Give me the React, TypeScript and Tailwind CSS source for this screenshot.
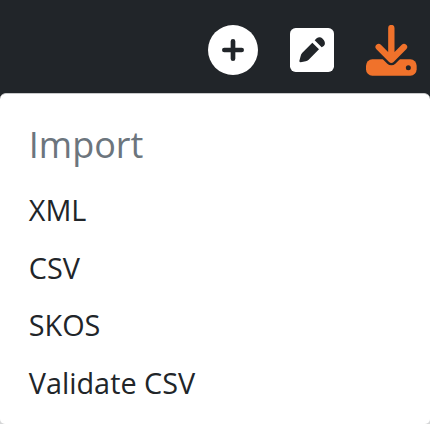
import React from "react";

const items = ["XML", "CSV", "SKOS", "Validate CSV"];

const AddIcon: React.FC = () => (
  <svg viewBox="0 0 150 150" className="h-[50px] w-[50px]">
    <circle cx="75" cy="75" r="75" fill="#fff" />
    <path d="M75 49V101M49 75H101" stroke="#212529" strokeWidth="14" strokeLinecap="round" />
  </svg>
);

const EditIcon: React.FC = () => (
  <svg viewBox="0 0 132 132" className="h-[44px] w-[44px]">
    <rect width="132" height="132" rx="17" fill="#fff" />
    <path
      d="M67 44L87 64L56 95Q52 99 47 100L32 103Q28 103 28 99L32 84Q33 78 37 74Z"
      fill="#212529"
    />
    <path
      d="M74 37L80 31Q89 24 98 32Q107 41 104 50Q103 53 95 58Z"
      fill="#212529"
    />
  </svg>
);

const ImportIcon: React.FC = () => (
  <svg viewBox="0 0 153 153" className="h-[51px] w-[51px]" fill="none">
    <rect x="0" y="103" width="152" height="49" rx="19" fill="#f0722b" />
    <circle cx="127" cy="128" r="7.5" fill="#212529" />
    {/* dark outline keeps the arrow head apart from the tray */}
    <path
      d="M38 66L76 104L114 66"
      stroke="#212529"
      strokeWidth="34"
      strokeLinejoin="round"
    />
    <path
      d="M76 9V103M38 66L76 104L114 66"
      stroke="#f0722b"
      strokeWidth="19"
      strokeLinecap="round"
      strokeLinejoin="round"
    />
  </svg>
);

const App: React.FC = () => {
  return (
    <div className="flex h-[424px] w-[430px] flex-col overflow-hidden bg-[linear-gradient(#212529_50%,#d5d6d7_50%)] font-['Open_Sans',sans-serif] antialiased">
      <div className="flex h-[93px] shrink-0 pt-[25px] pl-[208px]">
        <AddIcon />
        <div className="mt-[3px] ml-8">
          <EditIcon />
        </div>
        <div className="ml-8">
          <ImportIcon />
        </div>
      </div>
      <div className="flex flex-1 flex-col rounded-t-[6px] rounded-b-[5px] border-t border-[#c8c9ca] bg-white pl-[28.8px] text-[#212529]">
        <h6 className="mt-[26px] text-[36px] leading-[50px] text-[#6c757d]">Import</h6>
        <div className="mt-[11px] flex flex-col">
          {items.map((item) => (
            <a key={item} href="#" className="text-[28.8px] leading-[57.6px]">
              {item}
            </a>
          ))}
        </div>
      </div>
    </div>
  );
};

export default App;
